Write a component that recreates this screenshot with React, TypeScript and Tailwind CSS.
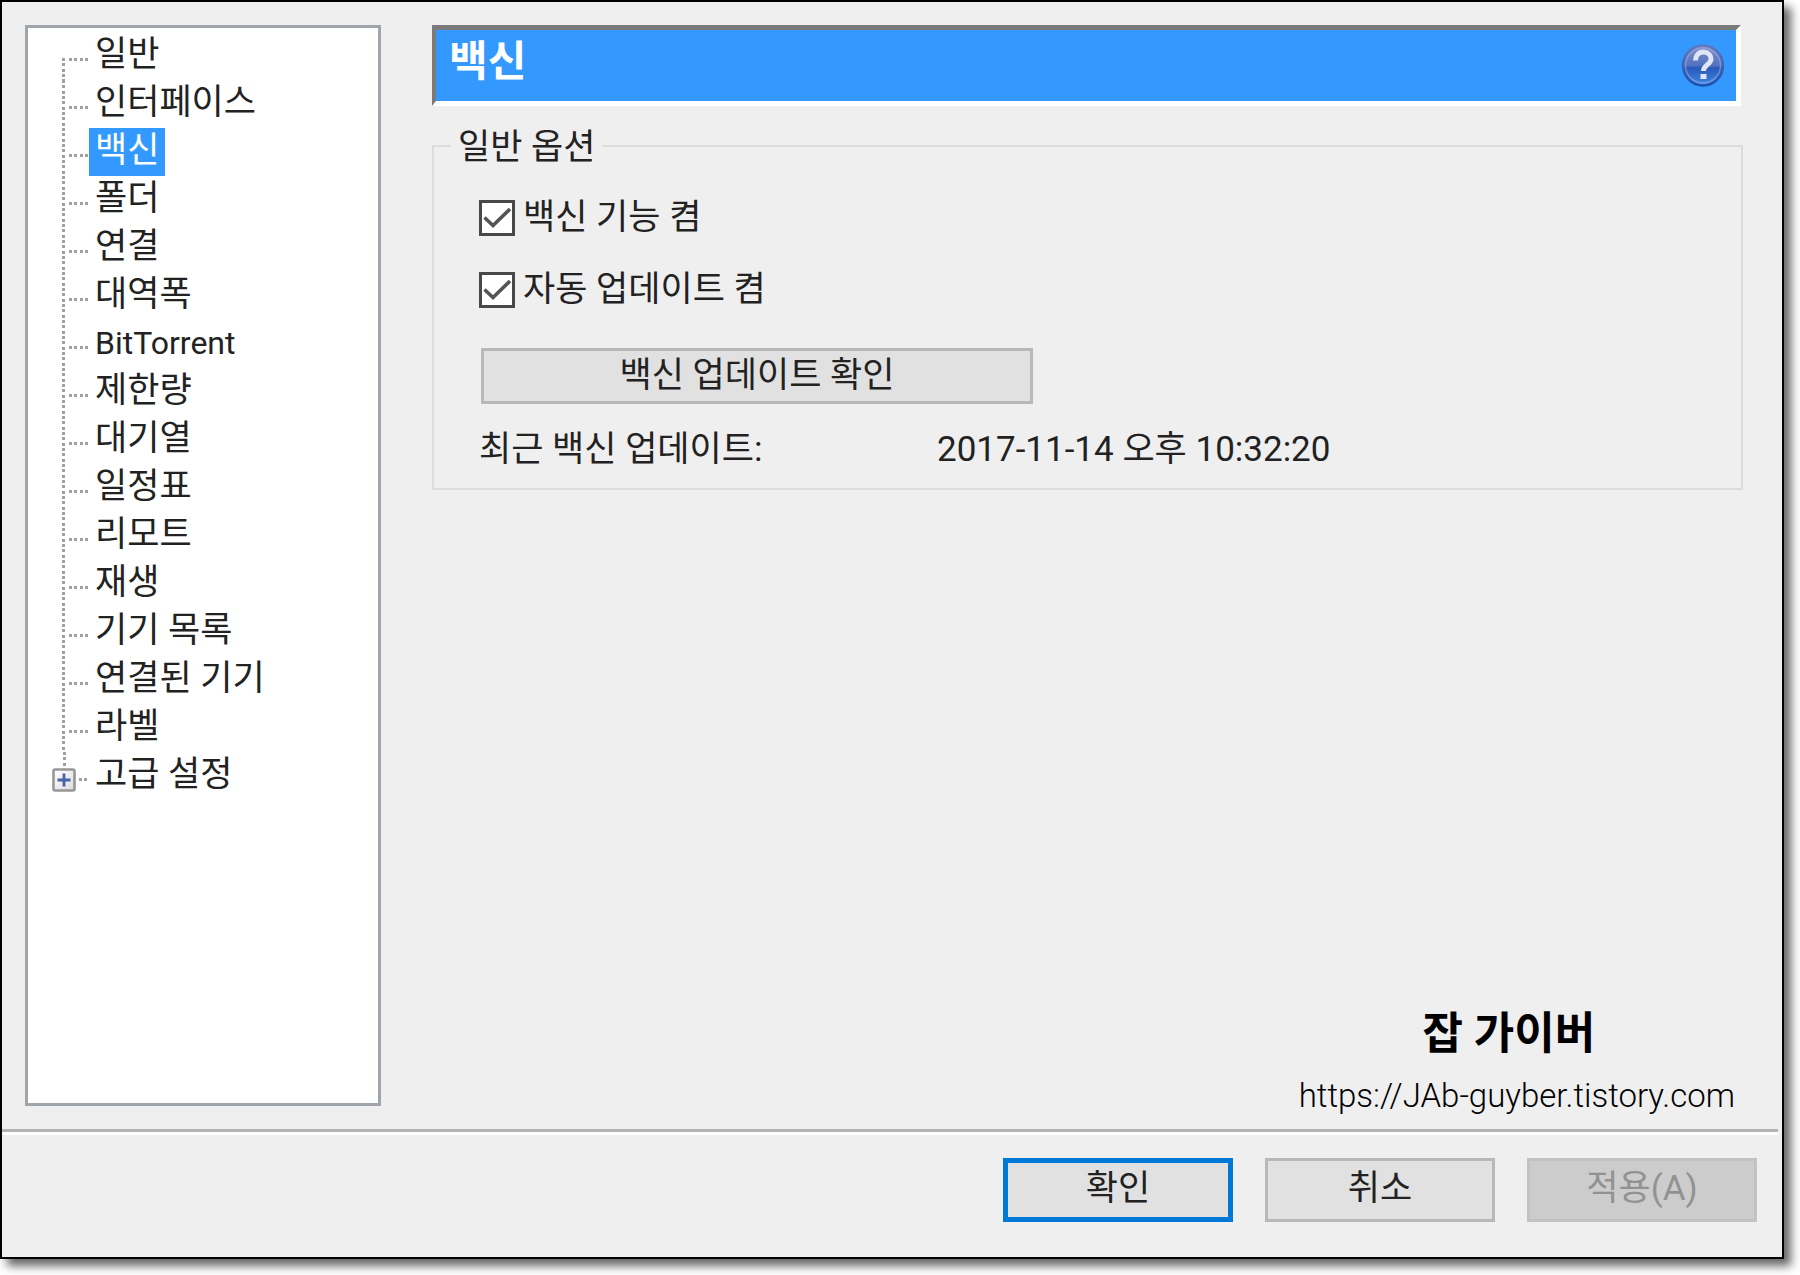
import React, { useState } from "react";
import clsx from "clsx";

const pages = [
  "일반",
  "인터페이스",
  "백신",
  "폴더",
  "연결",
  "대역폭",
  "BitTorrent",
  "제한량",
  "대기열",
  "일정표",
  "리모트",
  "재생",
  "기기 목록",
  "연결된 기기",
  "라벨",
  "고급 설정",
];

// dotted connectors, three dots every 16px so that rows of 48px tile
const dotsDown =
  "w-[3px] bg-[repeating-linear-gradient(to_bottom,#a0a0a0_0_3px,transparent_3px_5px,#a0a0a0_5px_8px,transparent_8px_11px,#a0a0a0_11px_14px,transparent_14px_16px)]";
const dotsAcross =
  "h-[3px] bg-[repeating-linear-gradient(to_right,#a0a0a0_0_3px,transparent_3px_5px,#a0a0a0_5px_8px,transparent_8px_11px,#a0a0a0_11px_14px,transparent_14px_16px)]";

const Branch = ({ first }: { first: boolean }) => (
  <div className="flex h-12 w-[37px] items-start gap-1 pl-[10px]">
    <span className={clsx(dotsDown, first ? "mt-[26px] h-[22px]" : "h-12")} />
    <span className={clsx(dotsAcross, "mt-[26px] w-[19px]")} />
  </div>
);

const ExpandBranch = () => (
  <div className="flex h-12 w-[37px] items-start gap-[3px]">
    <div className="flex w-6 flex-col items-center">
      <span className={clsx(dotsDown, "h-4")} />
      <button aria-label="펼치기" className="block h-6 w-6">
        <svg viewBox="0 0 24 24" className="h-6 w-6">
          <defs>
            <linearGradient id="box" x1="0" y1="0" x2="1" y2="1">
              <stop offset="0" stopColor="#ffffff" />
              <stop offset="1" stopColor="#dcdcdc" />
            </linearGradient>
          </defs>
          <rect x="1.5" y="1.5" width="21" height="21" rx="1.5" fill="url(#box)" stroke="#979797" strokeWidth="2.6" />
          <path d="M12 5.5v13M5.5 12h13" stroke="#4a63a7" strokeWidth="2.8" />
        </svg>
      </button>
    </div>
    <span className={clsx(dotsAcross, "mt-[26px] w-2")} />
  </div>
);

const Option = ({ label }: { label: string }) => {
  const [checked, setChecked] = useState(true);
  return (
    <label className="flex h-9 items-center gap-2">
      <span className="relative h-9 w-9">
        <input
          type="checkbox"
          checked={checked}
          onChange={() => setChecked(!checked)}
          className="block h-9 w-9 appearance-none border-3 border-[#484848] bg-white"
        />
        {checked && (
          <svg viewBox="0 0 36 36" className="pointer-events-none absolute inset-0 h-9 w-9">
            <path d="M5.5 17.5l8.5 8L31 9" fill="none" stroke="#555" strokeWidth="3.6" />
          </svg>
        )}
      </span>
      {label}
    </label>
  );
};

const HelpIcon = () => (
  <svg viewBox="0 0 44 44" className="h-11 w-11">
    <defs>
      <linearGradient id="ball" x1="0" y1="0" x2="0" y2="1">
        <stop offset="0" stopColor="#8590c8" />
        <stop offset="0.5" stopColor="#5272c0" />
        <stop offset="0.56" stopColor="#2a59b8" />
        <stop offset="1" stopColor="#3f8ae6" />
      </linearGradient>
      <linearGradient id="rim" x1="0" y1="0" x2="0" y2="1">
        <stop offset="0" stopColor="#5f78c0" />
        <stop offset="1" stopColor="#1c4fae" />
      </linearGradient>
    </defs>
    <circle cx="22" cy="21.5" r="20" fill="url(#ball)" stroke="url(#rim)" strokeWidth="2.5" />
    <circle cx="22" cy="21.5" r="17.5" fill="none" stroke="#9db3e6" strokeOpacity="0.5" strokeWidth="1.5" />
    <path
      d="M14.5 16.5c0-5 3.2-8.5 7.8-8.5s7.7 3 7.7 7c0 5.6-7.5 5.8-7.5 12"
      fill="none"
      stroke="#dfe6f6"
      strokeWidth="5"
    />
    <rect x="19.5" y="30" width="6" height="5" fill="#dfe6f6" />
  </svg>
);

export default function App() {
  const [selected, setSelected] = useState("백신");

  return (
    <div className="flex min-h-screen bg-white pr-4 pb-4 font-['Roboto','Noto_Sans_CJK_KR',sans-serif] text-[35px] leading-10 text-[#222]">
      <div className="flex flex-1 flex-col border-2 border-black bg-[#efefef] shadow-[7px_7px_9px_rgba(0,0,0,0.6)]">
        <div className="flex flex-1 gap-[51px] pt-[23px] pr-[39px] pb-[23px] pl-[23px]">
          <nav className="w-[356px] shrink-0 border-3 border-[#a0a5ab] bg-white pt-1 pl-6">
            <ul>
              {pages.map((page, i) => (
                <li key={page} className="flex h-12">
                  {i === pages.length - 1 ? <ExpandBranch /> : <Branch first={i === 0} />}
                  <button
                    onClick={() => setSelected(page)}
                    className={clsx(
                      "h-12 px-[6px] pb-0.5",
                      page === selected && "bg-[#3399ff] text-white",
                      page === "BitTorrent" && "text-[32px]"
                    )}
                  >
                    {page}
                  </button>
                </li>
              ))}
            </ul>
          </nav>

          <main className="flex flex-1 flex-col">
            <header className="mr-0.5 flex h-[81px] items-center justify-between border-t-5 border-r-5 border-b-5 border-l-4 border-t-[#7a7a7a] border-r-white border-b-white border-l-[#7a7a7a] bg-[#3399ff] pr-[11px] pl-[13px]">
              <h1 className="pb-2 text-[42px] font-bold text-white">{selected}</h1>
              <button aria-label="도움말">
                <HelpIcon />
              </button>
            </header>

            <fieldset className="mt-[18px] border-2 border-[#dcdcdc] px-[45px] pb-[18px]">
              <legend className="-ml-7 px-[7px] pt-1">일반 옵션</legend>
              <div className="flex flex-col gap-9 pt-8">
                <Option label="백신 기능 켬" />
                <Option label="자동 업데이트 켬" />
              </div>
              <button className="mt-10 ml-0.5 block h-14 w-[552px] border-3 border-[#b8b8b8] bg-[#e1e1e1]">
                백신 업데이트 확인
              </button>
              <div className="mt-[26px] flex">
                <span className="w-[458px]">최근 백신 업데이트:</span>
                <span>2017-11-14 오후 10:32:20</span>
              </div>
            </fieldset>

            <div className="mt-auto -mb-1 flex flex-col items-center gap-7 self-end pr-2 text-black">
              <p className="pr-4 text-[44px] font-bold">잡 가이버</p>
              <a href="https://JAb-guyber.tistory.com" className="text-[33px] leading-7 font-light">
                https://JAb-guyber.tistory.com
              </a>
            </div>
          </main>
        </div>

        <hr className="mr-1 h-[6px] border-t-3 border-b-3 border-t-[#b4b4b4] border-b-white" />
        <footer className="flex justify-end gap-8 pt-[23px] pr-[25px] pb-[35px]">
          <button className="h-16 w-[230px] border-5 border-[#0078d7] bg-[#e1e1e1] pb-0.5">확인</button>
          <button className="h-16 w-[230px] border-3 border-[#b8b8b8] bg-[#e1e1e1] pb-0.5">취소</button>
          <button disabled className="h-16 w-[230px] border-3 border-[#c2c2c2] bg-[#cccccc] pb-0.5 text-[#929292]">
            적용(A)
          </button>
        </footer>
      </div>
    </div>
  );
}
